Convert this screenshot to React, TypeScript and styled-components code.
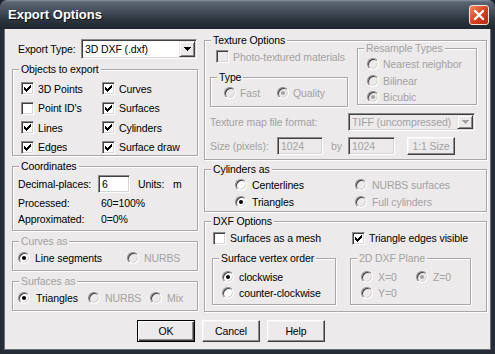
import styled, { createGlobalStyle } from "styled-components";

const FACE = "#eceaea";
const DIM = "#a4a2a2";

const GlobalStyle = createGlobalStyle`
  html, body {
    margin: 0;
    padding: 0;
    background: ${FACE};
  }
  body {
    font-family: "Liberation Sans", Arial, sans-serif;
    font-size: 10.5px;
    letter-spacing: -0.1px;
    color: #000;
  }
`;

const Window = styled.div`
  width: 495px;
  height: 354px;
  display: flex;
  flex-direction: column;
  background: #1d232b;
`;

const TitleBar = styled.div`
  height: 29px;
  flex: none;
  display: flex;
  align-items: center;
  justify-content: space-between;
  padding: 0 6px 0 8px;
  border-radius: 7px 7px 0 0;
  background: linear-gradient(#8a949f 0, #5d6773 2px, #47515d 10px, #2c343e 20px, #1f262f 29px);
  color: #fff;
  font-weight: bold;
  font-size: 13px;
  letter-spacing: 0;
  text-shadow: 1px 1px 0 #10151b;
`;

const CloseButton = styled.div`
  width: 20px;
  height: 20px;
  box-sizing: border-box;
  border: 1px solid #f3e3dc;
  border-radius: 3px;
  background: linear-gradient(135deg, #ef8a62, #d4401c 55%, #b52a0e);
  display: flex;
  align-items: center;
  justify-content: center;
`;

const Client = styled.div`
  flex: 1;
  background: ${FACE};
  border: 4px solid #262c35;
  border-top: none;
  box-shadow: inset 1px 0 #66707c, inset -1px 0 #66707c, inset 0 -1px #66707c;
  display: flex;
  flex-direction: column;
  padding: 10px 4px 0 8px;
`;

const Columns = styled.div`
  display: flex;
  gap: 6px;
`;

const LeftCol = styled.div`
  width: 186px;
  display: flex;
  flex-direction: column;
  gap: 10px;
`;

const RightCol = styled.div`
  width: 283px;
  display: flex;
  flex-direction: column;
  gap: 9px;
  padding-top: 1px;
`;

const Group = styled.div<{ $w?: number; $h: number; $pad: string; $mt?: number }>`
  position: relative;
  box-sizing: border-box;
  width: ${(p) => (p.$w ? `${p.$w}px` : "auto")};
  height: ${(p) => p.$h}px;
  margin-top: ${(p) => p.$mt ?? 0}px;
  padding: ${(p) => p.$pad};
  border: 1px solid #a9a7a7;
  box-shadow: inset 1px 1px #fff, 1px 1px #fff;
  flex: none;
`;

const Legend = styled.span<{ $disabled?: boolean }>`
  position: absolute;
  top: -7px;
  left: 6px;
  padding: 0 2px;
  line-height: 13px;
  background: ${FACE};
  color: ${(p) => (p.$disabled ? DIM : "#000")};
`;

const OptionGrid = styled.div<{ $cols: string; $row: number }>`
  display: grid;
  grid-template-columns: ${(p) => p.$cols};
  grid-auto-rows: ${(p) => p.$row}px;
`;

const Item = styled.label<{ $disabled?: boolean; $gap?: number }>`
  display: flex;
  align-items: center;
  gap: ${(p) => p.$gap ?? 4}px;
  white-space: nowrap;
  color: ${(p) => (p.$disabled ? DIM : "#000")};
`;

const Box = styled.span<{ $disabled?: boolean }>`
  width: 13px;
  height: 13px;
  box-sizing: border-box;
  flex: none;
  background: ${(p) => (p.$disabled ? FACE : "#fff")};
  border: 1px solid;
  border-color: #8d8b8a #fff #fff #8d8b8a;
  box-shadow: inset 1px 1px #404040, inset -1px -1px #d8d5d2;
  display: flex;
  align-items: center;
  justify-content: center;
`;

const Dot = styled.span<{ $disabled?: boolean; $on?: boolean }>`
  width: 12px;
  height: 12px;
  box-sizing: border-box;
  flex: none;
  border-radius: 50%;
  background: ${(p) => (p.$disabled ? FACE : "#fff")};
  border: 1px solid;
  border-color: #8d8b8a #fff #fff #8d8b8a;
  box-shadow: inset 1px 1px #404040, inset -1px -1px #d8d5d2;
  display: flex;
  align-items: center;
  justify-content: center;
  &::after {
    content: "";
    width: 4px;
    height: 4px;
    border-radius: 50%;
    background: ${(p) => (p.$disabled ? DIM : "#000")};
    display: ${(p) => (p.$on ? "block" : "none")};
  }
`;

const Row = styled.div<{ $h: number; $indent?: number; $mt?: number }>`
  display: flex;
  align-items: center;
  height: ${(p) => p.$h}px;
  padding-left: ${(p) => p.$indent ?? 0}px;
  margin-top: ${(p) => p.$mt ?? 0}px;
`;

const Label = styled.span<{ $w?: number; $disabled?: boolean; $pl?: number }>`
  width: ${(p) => (p.$w ? `${p.$w}px` : "auto")};
  padding-left: ${(p) => p.$pl ?? 0}px;
  box-sizing: border-box;
  flex: none;
  white-space: nowrap;
  color: ${(p) => (p.$disabled ? DIM : "#000")};
`;

const Field = styled.div<{ $w: number; $h: number; $disabled?: boolean }>`
  width: ${(p) => p.$w}px;
  height: ${(p) => p.$h}px;
  box-sizing: border-box;
  flex: none;
  display: flex;
  align-items: center;
  padding-left: 3px;
  white-space: nowrap;
  overflow: hidden;
  background: ${(p) => (p.$disabled ? FACE : "#fff")};
  color: ${(p) => (p.$disabled ? DIM : "#000")};
  border: 1px solid;
  border-color: #8d8b8a #fff #fff #8d8b8a;
  box-shadow: inset 1px 1px #404040, inset -1px -1px #d8d5d2;
`;

const DropButton = styled.span`
  width: 16px;
  flex: none;
  align-self: stretch;
  margin: 1px 1px 1px auto;
  box-sizing: border-box;
  background: ${FACE};
  border: 1px solid;
  border-color: #e9e7e4 #404040 #404040 #e9e7e4;
  box-shadow: inset 1px 1px #fff, inset -1px -1px #8d8b8a;
  display: flex;
  align-items: center;
  justify-content: center;
`;

const Button = styled.div<{ $w: number; $h: number; $default?: boolean; $disabled?: boolean; $ml?: number }>`
  width: ${(p) => p.$w}px;
  height: ${(p) => p.$h}px;
  margin-left: ${(p) => p.$ml ?? 0}px;
  box-sizing: border-box;
  flex: none;
  display: flex;
  align-items: center;
  justify-content: center;
  white-space: nowrap;
  background: ${FACE};
  color: ${(p) => (p.$disabled ? DIM : "#000")};
  border: 1px solid;
  border-color: ${(p) => (p.$default ? "#000" : "#fff #404040 #404040 #fff")};
  box-shadow: ${(p) =>
    p.$default
      ? "inset 1px 1px #fff, inset -1px -1px #404040, inset -2px -2px #8d8b8a"
      : "inset -1px -1px #8d8b8a, inset 1px 1px #f4f2f0"};
`;

const ButtonBar = styled.div`
  display: flex;
  gap: 7px;
  margin: 8px 0 0 125px;
`;

const TextureTop = styled.div`
  display: flex;
  gap: 9px;
`;

const TextureLeft = styled.div`
  width: 138px;
  display: flex;
  flex-direction: column;
`;

const SubGroups = styled.div`
  display: flex;
  gap: 14px;
  margin-top: 12px;
`;

type OptProps = { label: string; checked?: boolean; disabled?: boolean; gap?: number };

const Check = ({ label, checked, disabled }: OptProps) => (
  <Item $disabled={disabled}>
    <Box $disabled={disabled}>
      {checked && (
        <svg width="7" height="7" viewBox="0 0 7 7" shapeRendering="crispEdges">
          <path
            d="M0 2h1v1h1v1h1V3h1V2h1V1h1V0h1v3h-1v1h-1v1h-1v1h-1v1H2V6H1V5H0z"
            fill={disabled ? DIM : "#000"}
          />
        </svg>
      )}
    </Box>
    {label}
  </Item>
);

const Radio = ({ label, checked, disabled, gap }: OptProps) => (
  <Item $disabled={disabled} $gap={gap ?? 5}>
    <Dot $disabled={disabled} $on={checked} />
    {label}
  </Item>
);

const Select = ({ value, w, h, disabled }: { value: string; w: number; h: number; disabled?: boolean }) => (
  <Field $w={w} $h={h} $disabled={disabled}>
    {value}
    <DropButton>
      <svg width="7" height="4" viewBox="0 0 7 4" shapeRendering="crispEdges">
        <path d="M0 0h7L3.5 4z" fill={disabled ? DIM : "#000"} />
      </svg>
    </DropButton>
  </Field>
);

export default function App() {
  return (
    <>
      <GlobalStyle />
      <Window>
        <TitleBar>
          Export Options
          <CloseButton>
            <svg width="12" height="12" viewBox="0 0 12 12">
              <path d="M2 2l8 8M10 2l-8 8" stroke="#fff" strokeWidth="2.4" strokeLinecap="round" />
            </svg>
          </CloseButton>
        </TitleBar>
        <Client>
          <Columns>
            <LeftCol>
              <Row $h={20} $indent={6}>
                <Label $w={63}>Export Type:</Label>
                <Select value="3D DXF (.dxf)" w={116} h={20} />
              </Row>

              <Group $h={87} $pad="9px 0 0 8px">
                <Legend>Objects to export</Legend>
                <OptionGrid $cols="81px 1fr" $row={19.5}>
                  <Check label="3D Points" checked />
                  <Check label="Curves" checked />
                  <Check label="Point ID's" />
                  <Check label="Surfaces" checked />
                  <Check label="Lines" checked />
                  <Check label="Cylinders" checked />
                  <Check label="Edges" checked />
                  <Check label="Surface draw" checked />
                </OptionGrid>
              </Group>

              <Group $h={65} $pad="8px 0 0 5px">
                <Legend>Coordinates</Legend>
                <Row $h={18}>
                  <Label $w={80}>Decimal-places:</Label>
                  <Field $w={32} $h={18}>6</Field>
                  <Label $w={43} $pl={8}>Units:</Label>
                  <Label>m</Label>
                </Row>
                <Row $h={16} $mt={2}>
                  <Label $w={83}>Processed:</Label>
                  <Label>60=100%</Label>
                </Row>
                <Row $h={16}>
                  <Label $w={83}>Approximated:</Label>
                  <Label>0=0%</Label>
                </Row>
              </Group>

              <Group $h={30} $pad="8px 0 0 5px">
                <Legend $disabled>Curves as</Legend>
                <OptionGrid $cols="109px 1fr" $row={16}>
                  <Radio label="Line segments" checked />
                  <Radio label="NURBS" disabled />
                </OptionGrid>
              </Group>

              <Group $h={30} $pad="8px 0 0 5px">
                <Legend $disabled>Surfaces as</Legend>
                <OptionGrid $cols="70px 62px 1fr" $row={16}>
                  <Radio label="Triangles" checked gap={6} />
                  <Radio label="NURBS" disabled />
                  <Radio label="Mix" disabled />
                </OptionGrid>
              </Group>
            </LeftCol>

            <RightCol>
              <Group $h={120} $pad="7px 9px 0 5px">
                <Legend>Texture Options</Legend>
                <TextureTop>
                  <TextureLeft>
                    <Row $h={17} $indent={6}>
                      <Check label="Photo-textured materials" disabled />
                    </Row>
                    <Group $w={138} $h={30} $mt={12} $pad="7px 0 0 13px">
                      <Legend>Type</Legend>
                      <OptionGrid $cols="53px 1fr" $row={16}>
                        <Radio label="Fast" disabled gap={4} />
                        <Radio label="Quality" disabled checked gap={4} />
                      </OptionGrid>
                    </Group>
                  </TextureLeft>
                  <Group $w={120} $h={57} $pad="7px 0 0 9px">
                    <Legend $disabled>Resample Types</Legend>
                    <OptionGrid $cols="1fr" $row={16.5}>
                      <Radio label="Nearest neighbor" disabled gap={4} />
                      <Radio label="Bilinear" disabled gap={4} />
                      <Radio label="Bicubic" disabled checked gap={4} />
                    </OptionGrid>
                  </Group>
                </TextureTop>
                <Row $h={18} $mt={6}>
                  <Label $w={138} $disabled>Texture map file format:</Label>
                  <Select value="TIFF (uncompressed)" w={127} h={18} disabled />
                </Row>
                <Row $h={18} $mt={6}>
                  <Label $w={67} $disabled>Size (pixels):</Label>
                  <Field $w={46} $h={18} $disabled>1024</Field>
                  <Label $w={25} $pl={8} $disabled>by</Label>
                  <Field $w={47} $h={18} $disabled>1024</Field>
                  <Button $w={48} $h={18} $ml={12} $disabled>1:1 Size</Button>
                </Row>
              </Group>

              <Group $h={43} $pad="6px 0 0 30px">
                <Legend>Cylinders as</Legend>
                <OptionGrid $cols="120px 1fr" $row={17}>
                  <Radio label="Centerlines" />
                  <Radio label="NURBS surfaces" disabled />
                  <Radio label="Triangles" checked />
                  <Radio label="Full cylinders" disabled />
                </OptionGrid>
              </Group>

              <Group $h={91} $pad="8px 0 0 7px">
                <Legend>DXF Options</Legend>
                <Row $h={16} $indent={1}>
                  <OptionGrid $cols="139px 1fr" $row={16}>
                    <Check label="Surfaces as a mesh" />
                    <Check label="Triangle edges visible" checked />
                  </OptionGrid>
                </Row>
                <SubGroups>
                  <Group $w={124} $h={47} $pad="10px 0 0 9px">
                    <Legend>Surface vertex order</Legend>
                    <OptionGrid $cols="1fr" $row={16}>
                      <Radio label="clockwise" checked />
                      <Radio label="counter-clockwise" />
                    </OptionGrid>
                  </Group>
                  <Group $w={121} $h={47} $pad="10px 0 0 10px">
                    <Legend $disabled>2D DXF Plane</Legend>
                    <OptionGrid $cols="55px 1fr" $row={16}>
                      <Radio label="X=0" disabled />
                      <Radio label="Z=0" disabled checked />
                      <Radio label="Y=0" disabled />
                    </OptionGrid>
                  </Group>
                </SubGroups>
              </Group>
            </RightCol>
          </Columns>

          <ButtonBar>
            <Button $w={58} $h={22} $default>OK</Button>
            <Button $w={58} $h={22}>Cancel</Button>
            <Button $w={58} $h={22}>Help</Button>
          </ButtonBar>
        </Client>
      </Window>
    </>
  );
}
